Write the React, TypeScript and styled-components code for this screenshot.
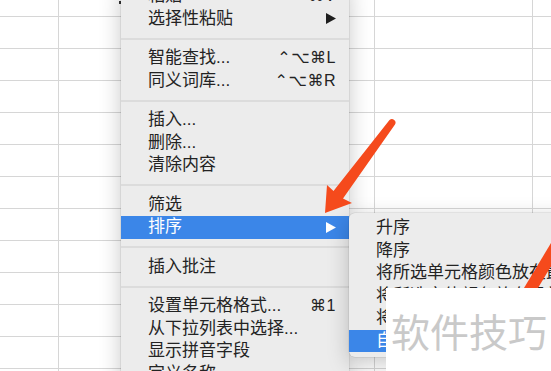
import React from "react";
import styled, { createGlobalStyle } from "styled-components";

const GlobalStyle = createGlobalStyle`
  html, body {
    margin: 0;
    padding: 0;
    background: #ffffff;
    overflow: hidden;
  }
  #root {
    position: relative;
    width: 551px;
    height: 371px;
    overflow: hidden;
  }
`;

const Sheet = styled.div`
  display: grid;
  grid-template-columns: 59px 158px 158px 158px 40px;
  grid-template-rows: 17px;
  grid-auto-rows: 32px;
  width: 551px;
  height: 371px;
  overflow: hidden;
  background: #ffffff;
`;

const Cell = styled.div`
  box-sizing: border-box;
  border-right: 1px solid #d6d6d6;
  border-bottom: 1px solid #d6d6d6;
`;

const menuFont = `"Liberation Sans", "Noto Sans CJK SC", sans-serif`;

const Menu = styled.div<{ $left: number; $top: number; $width: number; $radius: string }>`
  position: absolute;
  left: ${(p) => p.$left}px;
  top: ${(p) => p.$top}px;
  width: ${(p) => p.$width}px;
  box-sizing: border-box;
  padding: 4px 0 5px;
  background: #ececec;
  border-radius: ${(p) => p.$radius};
  box-shadow: 0 0 0 0.5px rgba(0, 0, 0, 0.12), 0 6px 22px rgba(0, 0, 0, 0.22);
  font-family: ${menuFont};
  font-size: 17px;
  color: #232323;
`;

const Item = styled.div<{ $active?: boolean }>`
  display: flex;
  align-items: center;
  height: 22.5px;
  line-height: 22.5px;
  padding: 0 13px 0 27px;
  white-space: nowrap;
  background: ${(p) => (p.$active ? "#3b86e8" : "transparent")};
  color: ${(p) => (p.$active ? "#ffffff" : "#232323")};
`;

const Label = styled.span`
  flex: 1;
  overflow: hidden;
`;

const Shortcut = styled.span`
  font-family: "Liberation Sans", "DejaVu Sans", sans-serif;
  font-size: 16px;
  letter-spacing: 0.5px;
`;

const Separator = styled.div`
  height: 17px;
  display: flex;
  align-items: center;
  &::after {
    content: "";
    flex: 1;
    height: 2px;
    background: #dcdcdc;
  }
`;

const Overlay = styled.svg`
  position: absolute;
  left: 0;
  top: 0;
  width: 551px;
  height: 371px;
  pointer-events: none;
`;

const Watermark = styled.div`
  position: absolute;
  left: 386px;
  top: 288px;
  right: 0;
  bottom: 0;
  background: #ffffff;
  display: flex;
  align-items: center;
  padding-left: 5px;
  font-family: "Noto Sans CJK SC", sans-serif;
  font-size: 39px;
  color: #c9c9c9;
  white-space: nowrap;
`;

const CursorDot = styled.div`
  position: absolute;
  left: 119px;
  top: 1px;
  width: 2px;
  height: 3px;
  background: #333333;
`;

const Tri = ({ color }: { color: string }) => (
  <svg width="10" height="11" viewBox="0 0 10 11">
    <path d="M0 0 L10 5.5 L0 11 Z" fill={color} />
  </svg>
);

type Entry =
  | { kind: "sep" }
  | { kind: "item"; label: string; shortcut?: string; sub?: boolean; active?: boolean };

const mainEntries: Entry[] = [
  { kind: "item", label: "粘贴", shortcut: "⌘V" },
  { kind: "item", label: "选择性粘贴", sub: true },
  { kind: "sep" },
  { kind: "item", label: "智能查找...", shortcut: "⌃⌥⌘L" },
  { kind: "item", label: "同义词库...", shortcut: "⌃⌥⌘R" },
  { kind: "sep" },
  { kind: "item", label: "插入..." },
  { kind: "item", label: "删除..." },
  { kind: "item", label: "清除内容" },
  { kind: "sep" },
  { kind: "item", label: "筛选", sub: true },
  { kind: "item", label: "排序", sub: true, active: true },
  { kind: "sep" },
  { kind: "item", label: "插入批注" },
  { kind: "sep" },
  { kind: "item", label: "设置单元格格式...", shortcut: "⌘1" },
  { kind: "item", label: "从下拉列表中选择..." },
  { kind: "item", label: "显示拼音字段" },
  { kind: "item", label: "定义名称..." },
];

const subEntries: Entry[] = [
  { kind: "item", label: "升序" },
  { kind: "item", label: "降序" },
  { kind: "item", label: "将所选单元格颜色放在最前面" },
  { kind: "item", label: "将所选字体颜色放在最前面" },
  { kind: "item", label: "将所选单元格图标放在最前面" },
  { kind: "item", label: "自定义排序...", active: true },
];

const renderEntries = (entries: Entry[]) =>
  entries.map((e, i) =>
    e.kind === "sep" ? (
      <Separator key={i} />
    ) : (
      <Item key={i} $active={e.active}>
        <Label>{e.label}</Label>
        {e.shortcut && <Shortcut>{e.shortcut}</Shortcut>}
        {e.sub && <Tri color={e.active ? "#ffffff" : "#1e1e1e"} />}
      </Item>
    )
  );

export default function App() {
  const cells = Array.from({ length: 5 * 13 });
  return (
    <>
      <GlobalStyle />
      <Sheet>
        {cells.map((_, i) => (
          <Cell key={i} />
        ))}
      </Sheet>
      <CursorDot />
      <Menu $left={121} $top={-19} $width={228} $radius="0 0 6px 6px">
        {renderEntries(mainEntries)}
      </Menu>
      <Menu $left={349} $top={213} $width={280} $radius="6px">
        {renderEntries(subEntries)}
      </Menu>
      <Overlay viewBox="0 0 551 371">
        <path
          d="M325 213 L327 185 L333.5 191 L389.5 120 A3.6 3.6 0 0 1 395 124.5 L343 198.5 L352 203 Z"
          fill="#f54a1c"
        />
        <path d="M551 243 L553 243 L553 263 L538 288 L524 288 Z" fill="#f54a1c" />
      </Overlay>
      <Watermark>软件技巧</Watermark>
    </>
  );
}
